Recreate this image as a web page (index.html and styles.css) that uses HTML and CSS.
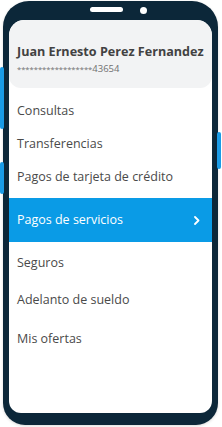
FILE: index.html
```html
<!DOCTYPE html>
<html lang="es">
<head>
<meta charset="utf-8">
<link rel="stylesheet" href="styles.css">
</head>
<body>
<div class="phone">
  <span class="btn btn-l1"></span>
  <span class="btn btn-l2"></span>
  <span class="btn btn-r1"></span>
  <div class="topbar"><span class="speaker"></span><span class="camera"></span></div>
  <div class="screen">
    <div class="header">
      <div class="name">Juan Ernesto Perez Fernandez</div>
      <div class="account"><span class="stars">******************</span><span class="digits">43654</span></div>
    </div>
    <ul class="menu">
      <li class="item i1">Consultas</li>
      <li class="item i2">Transferencias</li>
      <li class="item i3">Pagos de tarjeta de crédito</li>
      <li class="item active">Pagos de servicios
        <svg class="chev" width="6" height="9" viewBox="0 0 6 9"><path d="M1 1 L4.5 4.5 L1 8" fill="none" stroke="#fff" stroke-width="1.8" stroke-linecap="round" stroke-linejoin="round"/></svg>
      </li>
      <li class="item i5">Seguros</li>
      <li class="item i6">Adelanto de sueldo</li>
      <li class="item i7">Mis ofertas</li>
    </ul>
  </div>
</div>
</body>
</html>
```
FILE: styles.css
```css
html, body { margin: 0; padding: 0; background: #fff; }
body { width: 222px; height: 427px; overflow: hidden; font-family: "Open Sans", "Liberation Sans", sans-serif; }
.phone {
  position: relative;
  margin: 1px 0 0 3px;
  width: 215px;
  height: 424px;
  box-sizing: border-box;
  background: #0c2739;
  border-radius: 26px 26px 22px 22px;
  padding: 0 6px 12px 6px;
  display: flex;
  flex-direction: column;
  box-shadow: 0 1px 3px rgba(0,0,0,0.15);
}
.btn { position: absolute; background: #1a9be6; width: 4px; border-radius: 2px; }
.btn-l1 { left: -3px; top: 66px; height: 62px; }
.btn-l2 { left: -3px; top: 161px; height: 32px; }
.btn-r1 { right: -3px; top: 131px; height: 37px; }
.topbar { height: 19px; display: flex; align-items: center; justify-content: center; gap: 17px; padding-left: 15px; }
.speaker { width: 33px; height: 5px; background: #fff; border-radius: 3px; margin-top: -2px; }
.camera { width: 7px; height: 7px; background: #fff; border-radius: 50%; margin-top: -1px; }
.screen { flex: 1; background: #fff; border-radius: 15px 15px 12px 12px; overflow: hidden; }
.header { background: #f2f3f4; height: 68px; border-radius: 15px 15px 12px 12px; box-sizing: border-box; padding: 24px 0 0 8px; }
.name { font-weight: 700; font-size: 12.6px; color: #424242; line-height: 15px; white-space: nowrap; }
.account { color: #707070; line-height: 12px; margin-top: 1px; white-space: nowrap; }
.stars { font-size: 7.6px; }
.digits { font-size: 9.5px; }
.menu { list-style: none; margin: 0; padding: 6px 0 0 0; }
.item { font-size: 12.5px; color: #4a4a4a; height: 33px; line-height: 33px; padding-left: 8px; white-space: nowrap; }
.item.active { background: #0a9be6; color: #fff; height: 44px; line-height: 44px; margin-top: 5px; display: flex; align-items: center; justify-content: space-between; padding-right: 12px; }
.i5 { margin-top: 4px; }
.i6 { margin-top: 4px; }
.i7 { margin-top: 6px; }
```
